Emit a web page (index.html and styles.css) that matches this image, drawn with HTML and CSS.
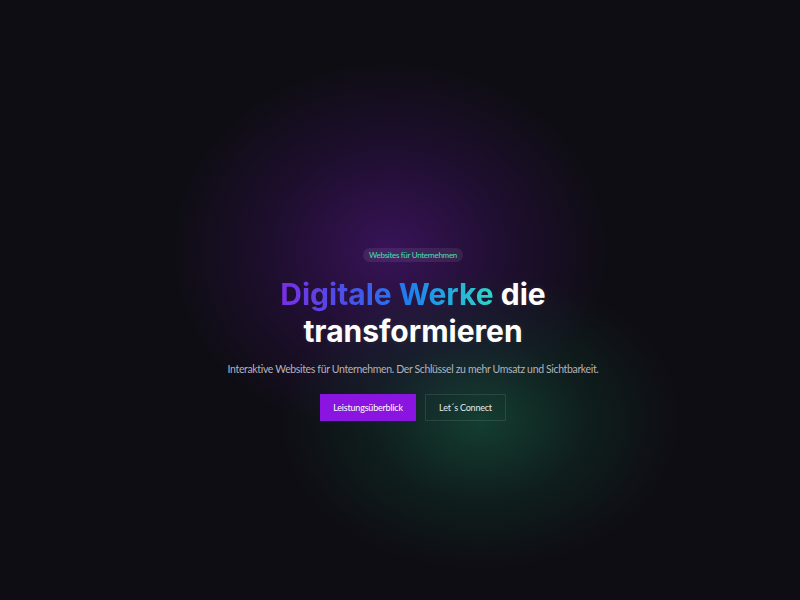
FILE: index.html
```html
<!DOCTYPE html>
<html lang="de">
<head>
<meta charset="utf-8">
<title>Digitale Werke</title>
<link rel="stylesheet" href="styles.css">
</head>
<body>
<main class="hero">
  <div class="glow glow-purple"></div>
  <div class="glow glow-green"></div>
  <section class="content">
    <span class="badge">Websites für Unternehmen</span>
    <h1 class="title"><span class="grad">Digitale Werke</span> die<br>transformieren</h1>
    <p class="lead">Interaktive Websites für Unternehmen. Der Schlüssel zu mehr Umsatz und Sichtbarkeit.</p>
    <div class="actions">
      <a class="btn btn-primary" href="#">Leistungsüberblick</a>
      <a class="btn btn-ghost" href="#">Let´s Connect</a>
    </div>
  </section>
</main>
</body>
</html>
```

FILE: styles.css
```css
* { box-sizing: border-box; }
html, body { margin: 0; padding: 0; height: 100%; }
body {
  background: #0e0d13;
  font-family: "Lato", "Open Sans", sans-serif;
  color: #fff;
  overflow: hidden;
}
.hero {
  position: relative;
  width: 800px;
  height: 600px;
  overflow: hidden;
  background: #0e0d13;
}
.glow {
  position: absolute;
  border-radius: 50%;
  pointer-events: none;
}
.glow-purple {
  left: 170px; top: 60px;
  width: 440px; height: 380px;
  background: radial-gradient(closest-side, rgba(64, 20, 100, 0.85), rgba(48, 16, 78, 0.45) 55%, rgba(14, 13, 19, 0) 100%);
}
.glow-green {
  left: 280px; top: 270px;
  width: 400px; height: 300px;
  background: radial-gradient(closest-side, rgba(22, 78, 58, 0.75), rgba(16, 55, 44, 0.38) 55%, rgba(14, 13, 19, 0) 100%);
}
.content {
  position: relative;
  display: flex;
  flex-direction: column;
  align-items: center;
  padding-top: 248px;
  padding-left: 26px;
  text-align: center;
}
.badge {
  display: inline-block;
  height: 14px;
  line-height: 14px;
  padding: 0 6px;
  border-radius: 7px;
  background: rgba(255, 255, 255, 0.08);
  color: #3fe0b2;
  font-size: 8px;
  letter-spacing: -0.3px;
}
.title {
  margin: 14px 0 0;
  font-family: "Inter", "DejaVu Sans", sans-serif;
  font-weight: 700;
  font-size: 30px;
  line-height: 37px;
  letter-spacing: 0;
  color: #fff;
  text-shadow: 0 0 6px rgba(255, 255, 255, 0.08);
}
.grad {
  background: linear-gradient(90deg, #7a2ee6 0%, #4455e8 35%, #1d7ff0 60%, #2ad9c9 100%);
  -webkit-background-clip: text;
  background-clip: text;
  color: transparent;
  text-shadow: none;
}
.lead {
  margin: 13px 0 0;
  font-size: 10.5px;
  letter-spacing: -0.35px;
  color: #b4b2bc;
}
.actions {
  display: flex;
  gap: 9px;
  margin-top: 19px;
}
.btn {
  display: inline-flex;
  align-items: center;
  justify-content: center;
  height: 27px;
  padding: 0 8px;
  font-size: 9px;
  letter-spacing: -0.2px;
  color: #fff;
  text-decoration: none;
}
.btn-primary {
  background: #8a14e0;
  width: 96px;
}
.btn-ghost {
  border: 1px solid rgba(255, 255, 255, 0.1);
  width: 81px;
  color: #e8e8ec;
}
```
